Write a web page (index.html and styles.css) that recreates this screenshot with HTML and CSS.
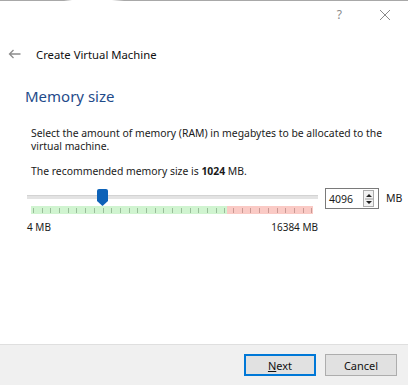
FILE: index.html
```html
<!DOCTYPE html>
<html>
<head>
<meta charset="utf-8">
<link rel="stylesheet" href="styles.css">
</head>
<body>
<div class="window">
  <div class="topline"></div>
  <div class="titlebar">
    <span class="tb-help">?</span>
    <svg class="tb-close" width="12" height="12" viewBox="0 0 12 12"><path d="M1 1L11 11M11 1L1 11" stroke="#8a8a8a" stroke-width="1" fill="none"/></svg>
  </div>
  <div class="header">
    <svg class="back" width="13" height="10" viewBox="0 0 13 10"><path d="M12.5 5H1.5M5.5 1L1.5 5L5.5 9" stroke="#8c8c8c" stroke-width="1.3" fill="none"/></svg>
    <span class="header-title">Create Virtual Machine</span>
  </div>
  <main class="page">
    <h1 class="page-title">Memory size</h1>
    <p class="desc">Select the amount of memory (RAM) in megabytes to be allocated to the virtual machine.</p>
    <p class="recommend">The recommended memory size is <b>1024</b> MB.</p>
    <div class="memrow">
      <div class="slider">
        <div class="track">
          <svg class="thumb" width="11" height="17" viewBox="0 0 11 17"><path d="M2 0H9A2 2 0 0 1 11 2V12L5.5 17L0 12V2A2 2 0 0 1 2 0Z" fill="#0d62b8"/></svg>
        </div>
        <div class="ticks"><div class="green"></div><div class="red"></div></div>
        <div class="labels"><span>4 MB</span><span>16384 MB</span></div>
      </div>
      <div class="spin">
        <span class="spin-val">4096</span>
        <span class="spin-btn">
          <svg width="8" height="14" viewBox="0 0 8 14"><path d="M1 5L4 2L7 5Z M1 9L4 12L7 9Z" fill="#222"/><path d="M0 7H8" stroke="#888" stroke-width="0.8"/></svg>
        </span>
      </div>
      <span class="unit">MB</span>
    </div>
  </main>
  <footer class="footer">
    <button class="btn btn-default"><u>N</u>ext</button>
    <button class="btn">Cancel</button>
  </footer>
</div>
</body>
</html>
```
FILE: styles.css
```css
html, body {
  margin: 0;
  padding: 0;
}
body {
  width: 408px;
  height: 385px;
  overflow: hidden;
  background: #ffffff;
  font-family: "Noto Sans", "Open Sans", sans-serif;
  color: #1a1a1a;
}
.window {
  height: 385px;
  display: flex;
  flex-direction: column;
}
.topline {
  height: 1px;
  background: linear-gradient(to right, #a8a8a8 0, #a8a8a8 64px, #ffffff 72px, #ffffff 112px, #a8a8a8 124px, #a8a8a8 100%);
}
.titlebar {
  height: 28px;
  display: flex;
  justify-content: flex-end;
  align-items: center;
  padding-right: 17px;
  gap: 37px;
}
.tb-help {
  font-size: 12px;
  color: #8a8a8a;
  line-height: 1;
}
.tb-close {
  display: block;
}
.header {
  display: flex;
  align-items: center;
  height: 22px;
  margin-top: 14px;
  padding-left: 8px;
}
.back {
  display: block;
  margin-right: 15px;
}
.header-title {
  font-size: 11.3px;
  color: #111;
}
.page {
  flex: 1;
  padding-left: 25px;
  padding-right: 8px;
}
.page-title {
  margin: 21px 0 0 0;
  font-size: 15px;
  font-weight: normal;
  color: #1f4b8a;
  line-height: 20px;
}
.desc {
  margin: 21px 0 0 6px;
  font-size: 10.4px;
  line-height: 13px;
}
.recommend {
  margin: 12px 0 0 6px;
  font-size: 10.4px;
  line-height: 13px;
}
.memrow {
  display: flex;
  align-items: flex-start;
  margin-top: 10px;
  margin-left: 2px;
}
.slider {
  width: 291px;
  flex-shrink: 0;
}
.track {
  position: relative;
  height: 3px;
  margin-top: 7px;
  background: #e3e3e3;
  border-top: 1px solid #d3d3d3;
}
.thumb {
  position: absolute;
  left: 70px;
  top: -7px;
  display: block;
}
.ticks {
  display: flex;
  height: 8px;
  margin: 7px 5px 0 4px;
  background-image: repeating-linear-gradient(to right, #9c9c9c 0, #9c9c9c 1px, transparent 1px, transparent 8.7px);
  background-size: 100% 5px;
  background-repeat: no-repeat;
  background-position: 2px 2px;
}
.green {
  width: 196px;
  background: rgba(150, 230, 150, 0.45);
}
.red {
  flex: 1;
  background: rgba(245, 150, 140, 0.5);
}
.labels {
  display: flex;
  justify-content: space-between;
  margin-top: 7px;
  font-size: 10px;
  line-height: 12px;
}
.spin {
  display: flex;
  align-items: center;
  justify-content: space-between;
  flex-shrink: 0;
  box-sizing: border-box;
  width: 54px;
  height: 21px;
  margin-left: 7px;
  margin-top: 0;
  border: 1px solid #7a7a7a;
  padding: 0 4px 0 3px;
}
.spin-val {
  font-size: 10.5px;
}
.spin-btn {
  display: flex;
  align-items: center;
  justify-content: center;
  width: 9px;
  height: 15px;
  border: 1px solid #adadad;
  background: #f2f2f2;
}
.spin-btn svg {
  display: block;
}
.unit {
  margin-left: 7px;
  font-size: 10.5px;
  line-height: 21px;
}
.footer {
  height: 40px;
  background: #f0f0f0;
  border-top: 1px solid #dfdfdf;
  display: flex;
  justify-content: flex-end;
  align-items: center;
  gap: 9px;
  padding-right: 11px;
}
.btn {
  width: 72px;
  height: 22px;
  font-family: "Noto Sans", "Open Sans", sans-serif;
  font-size: 11px;
  color: #111;
  background: #e1e1e1;
  border: 1px solid #adadad;
  padding: 0;
  margin: 0;
}
.btn-default {
  border: 2px solid #0078d7;
}
```
